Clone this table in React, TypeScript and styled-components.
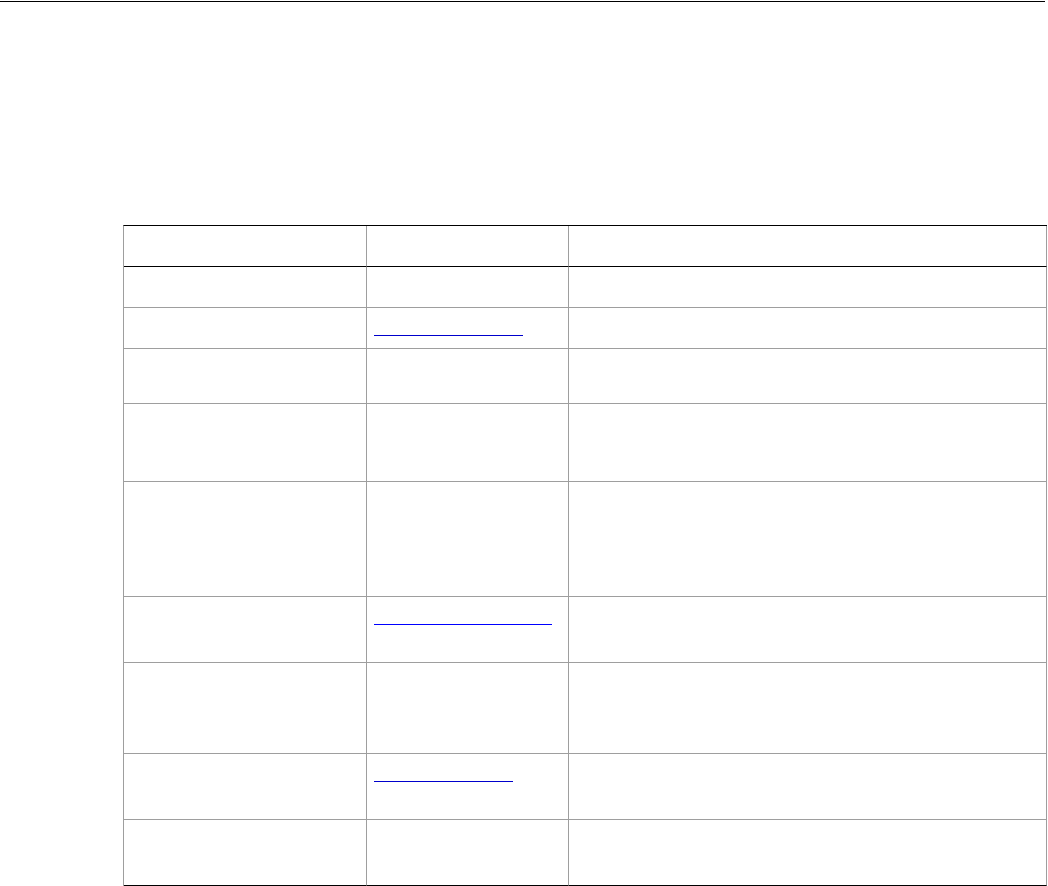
import React from "react";
import styled, { createGlobalStyle } from "styled-components";

const Global = createGlobalStyle`
  html, body { margin: 0; padding: 0; background: #ffffff; }
  body { font-family: "Liberation Sans", Arial, sans-serif; font-size: 13px; color: #000; }
`;

const Page = styled.div`
  width: 1048px;
  min-height: 886px;
  display: flex;
  flex-direction: column;
`;

const TopRule = styled.div`
  margin-top: 1px;
  width: 1045px;
  border-top: 1px solid #000;
`;

const Content = styled.div`
  padding: 223px 0 0 123px;
`;

const Grid = styled.div`
  display: grid;
  grid-template-columns: 243px 202px 478px;
  width: 924px;
  border-left: 1px solid #9e9e9e;
  border-top: 1px solid #000;
  box-sizing: border-box;
`;

const Cell = styled.div<{ $h: number; $dark?: boolean }>`
  box-sizing: border-box;
  height: ${(p) => p.$h}px;
  border-right: 1px solid #9e9e9e;
  border-bottom: 1px solid ${(p) => (p.$dark ? "#000" : "#9e9e9e")};
  padding: 18px 7px 0 7px;
`;

const Link = styled.a<{ $w: number; $c: string }>`
  display: block;
  width: ${(p) => p.$w}px;
  height: 9px;
  border-bottom: 1px solid ${(p) => p.$c};
`;

type Row = { h: number; link?: { w: number; c: string } };

const rows: Row[] = [
  { h: 41 },
  { h: 41 },
  { h: 41, link: { w: 149, c: "#0000cc" } },
  { h: 55 },
  { h: 78 },
  { h: 115 },
  { h: 66, link: { w: 178, c: "#0000ff" } },
  { h: 91 },
  { h: 66, link: { w: 139, c: "#0000cc" } },
  { h: 66 },
];

export default function App() {
  return (
    <Page>
      <Global />
      <TopRule />
      <Content>
        <Grid>
          {rows.map((r, i) => {
            const last = i === rows.length - 1;
            const dark = i === 0 || last;
            return (
              <React.Fragment key={i}>
                <Cell $h={r.h} $dark={dark} />
                <Cell $h={r.h} $dark={dark}>
                  {r.link && <Link $w={r.link.w} $c={r.link.c} href="#" />}
                </Cell>
                <Cell $h={r.h} $dark={dark} />
              </React.Fragment>
            );
          })}
        </Grid>
      </Content>
    </Page>
  );
}
